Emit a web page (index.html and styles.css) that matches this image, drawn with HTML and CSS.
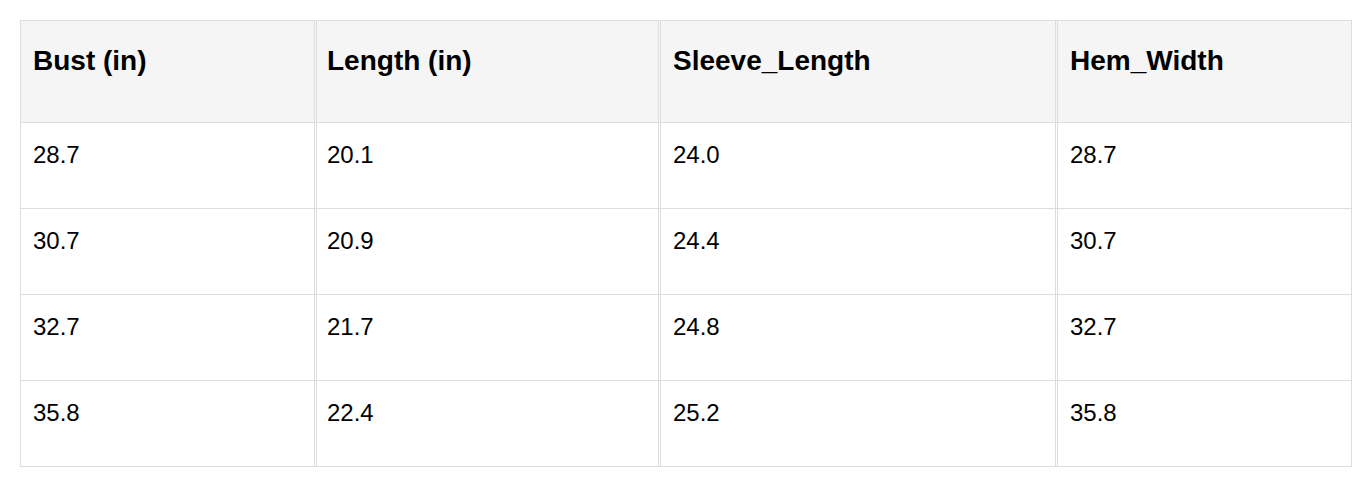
FILE: index.html
```html
<!DOCTYPE html>
<html>
<head>
<meta charset="utf-8">
<link rel="stylesheet" href="styles.css">
</head>
<body>
<table class="size-table">
  <colgroup>
    <col class="c1"><col class="c2"><col class="c3"><col class="c4">
  </colgroup>
  <thead>
    <tr><th>Bust (in)</th><th class="tight">Length (in)</th><th>Sleeve_Length</th><th>Hem_Width</th></tr>
  </thead>
  <tbody>
    <tr><td>28.7</td><td class="tight">20.1</td><td>24.0</td><td>28.7</td></tr>
    <tr><td>30.7</td><td class="tight">20.9</td><td>24.4</td><td>30.7</td></tr>
    <tr><td>32.7</td><td class="tight">21.7</td><td>24.8</td><td>32.7</td></tr>
    <tr><td>35.8</td><td class="tight">22.4</td><td>25.2</td><td>35.8</td></tr>
  </tbody>
</table>
</body>
</html>
```
FILE: styles.css
```css
html, body {
  margin: 0;
  padding: 0;
  background: #ffffff;
}
body {
  padding: 20px;
  font-family: "Liberation Sans", Arial, sans-serif;
  color: #000;
}
.size-table {
  width: 1331px;
  table-layout: fixed;
  border-collapse: separate;
  border-spacing: 0;
  border-top: 1px solid #dddddd;
  border-left: 1px solid #dddddd;
}
.c1 { width: 296px; }
.c2 { width: 344px; }
.c3 { width: 397px; }
.c4 { width: 294px; }
.size-table th,
.size-table td {
  text-align: left;
  padding: 0 12px;
  border-bottom: 1px solid #dddddd;
  border-right: 3px double #dddddd;
}
.size-table th:last-child,
.size-table td:last-child {
  border-right: 1px solid #dddddd;
}
.size-table th {
  background: #f5f5f5;
  font-weight: bold;
  font-size: 28px;
  line-height: 32px;
  padding-top: 24px;
  padding-bottom: 45px;
}
.size-table td {
  font-size: 24px;
  line-height: 28px;
  padding-top: 18px;
  padding-bottom: 39px;
}
.size-table .tight {
  padding-left: 10px;
}
```
